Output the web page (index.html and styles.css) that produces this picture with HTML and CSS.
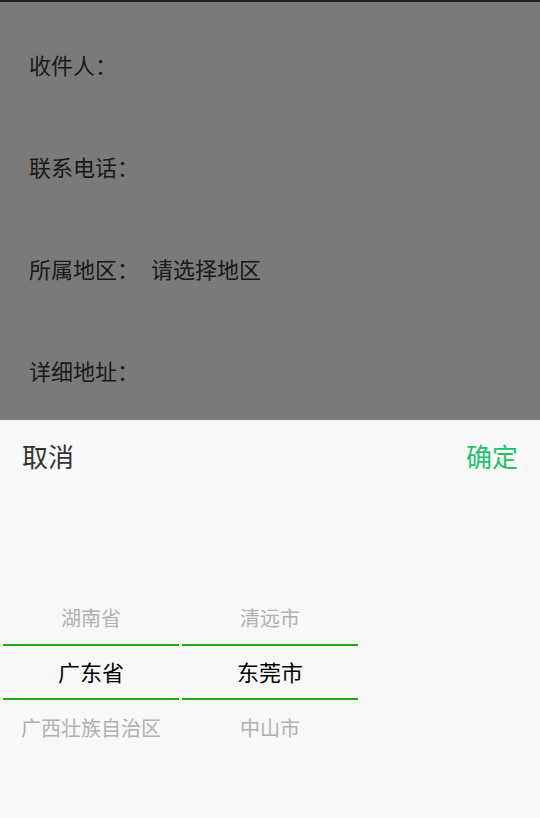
FILE: index.html
```html
<!DOCTYPE html>
<html>

<head>
    <meta charset="utf-8">
    <link rel="stylesheet" href="styles.css">
</head>

<body>
    <div class="topbar"></div>

    <!-- address form -->
    <div class="form">
        <div class="row"><span class="label">收件人：</span></div>
        <div class="row"><span class="label">联系电话：</span></div>
        <div class="row"><span class="label">所属地区：</span><span class="value">请选择地区</span></div>
        <div class="row"><span class="label">详细地址：</span></div>
    </div>

    <div class="mask"></div>

    <!-- region picker -->
    <div class="sheet">
        <div class="sheet-header">
            <span class="btn-cancel">取消</span>
            <span class="btn-ok">确定</span>
        </div>
        <div class="picker">
            <div class="picker-col">
                <div class="picker-item">湖南省</div>
                <div class="picker-item selected">广东省</div>
                <div class="picker-item">广西壮族自治区</div>
            </div>
            <div class="picker-col">
                <div class="picker-item">清远市</div>
                <div class="picker-item selected">东莞市</div>
                <div class="picker-item">中山市</div>
            </div>
        </div>
    </div>
</body>

</html>
```

FILE: styles.css
```css
* {
    margin: 0;
    padding: 0;
    box-sizing: border-box;
}

html,
body {
    height: 100%;
}

body {
    background: #f5f5f5;
    font-family: "Noto Sans CJK SC", "Noto Sans", sans-serif;
    color: #333;
    overflow: hidden;
}

.topbar {
    height: 2px;
    background: #444;
}

.form {
    padding: 11px 0 0 29px;
}

.row {
    height: 102px;
    display: flex;
    align-items: center;
    font-size: 22px;
}

.value {
    margin-left: 12px;
}

/* dim layer behind the sheet */
.mask {
    position: fixed;
    left: 0;
    top: 0;
    right: 0;
    bottom: 0;
    background: rgba(0, 0, 0, 0.5);
}

.sheet {
    position: fixed;
    left: 0;
    right: 0;
    bottom: 0;
    height: 398px;
    background: #f8f8f8;
}

.sheet-header {
    height: 74px;
    display: flex;
    align-items: center;
    justify-content: space-between;
    padding: 0 22px 4px 22px;
    font-size: 26px;
}

.btn-cancel {
    color: #333;
}

.btn-ok {
    color: #1ec26b;
}

.picker {
    display: flex;
    gap: 3px;
    padding: 96px 0 0 3px;
}

.picker-col {
    width: 176px;
}

.picker-item {
    height: 54px;
    display: flex;
    align-items: center;
    justify-content: center;
    font-size: 20px;
    color: #b0b0b0;
    white-space: nowrap;
}

.picker-item.selected {
    height: 56px;
    border-top: 2px solid #1aad19;
    border-bottom: 2px solid #1aad19;
    padding-bottom: 2px;
    font-size: 22px;
    color: #000;
}
```
